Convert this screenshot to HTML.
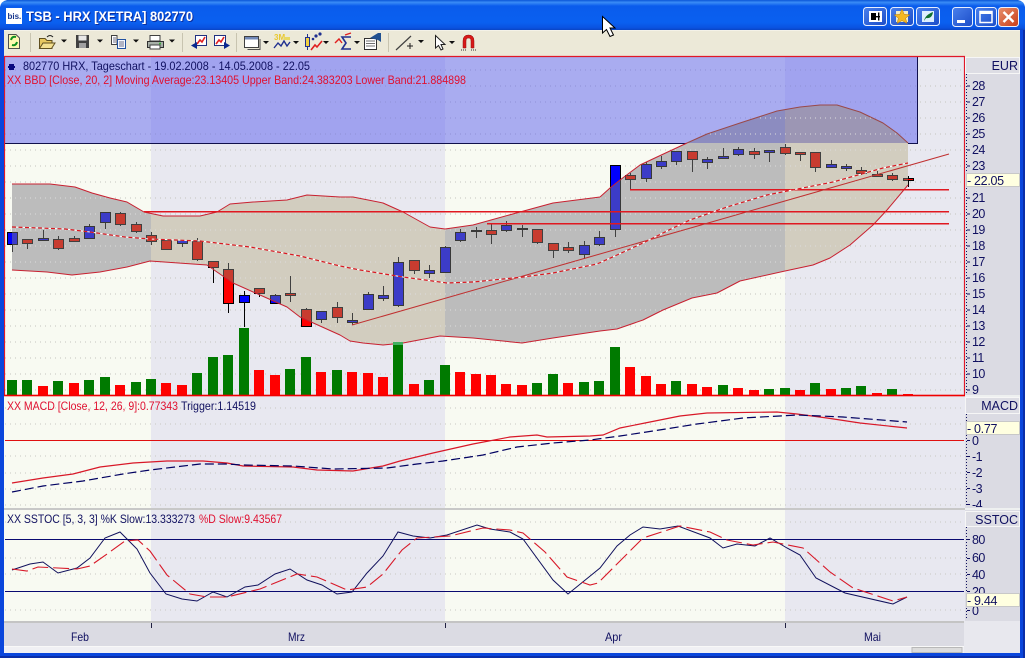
<!DOCTYPE html>
<html><head><meta charset="utf-8"><title>TSB - HRX [XETRA] 802770</title>
<style>
html,body{margin:0;padding:0;background:#fff;width:1025px;height:658px;overflow:hidden}
svg{display:block;font-family:"Liberation Sans",sans-serif}
</style></head><body>
<svg width="1025" height="658" viewBox="0 0 1025 658" xmlns="http://www.w3.org/2000/svg">
<defs>
<linearGradient id="tb" x1="0" y1="0" x2="0" y2="1">
<stop offset="0" stop-color="#0A56D8"/><stop offset=".08" stop-color="#3A8CF6"/><stop offset=".2" stop-color="#0A5CEC"/><stop offset=".75" stop-color="#0A60F0"/><stop offset=".93" stop-color="#0A52E0"/><stop offset="1" stop-color="#0A44C4"/>
</linearGradient>
<linearGradient id="bb" x1="0" y1="0" x2="1" y2="1"><stop offset="0" stop-color="#4A80EC"/><stop offset="1" stop-color="#1A4CC8"/></linearGradient>
<linearGradient id="rb" x1="0" y1="0" x2="1" y2="1"><stop offset="0" stop-color="#E8906C"/><stop offset="1" stop-color="#C83C18"/></linearGradient>
<path id="band" d="M12 184L50 184L75 187L92 193L110 198L127 202L144 212L163 216L200 216L217 212L230 204L253 202L287 200L307 195L340 197L353 197L383 203L403 212L430 227L445 229L473 225L520 212L553 203L600 197L610 188L620 180L640 165L657 157L672 150L687 143L707 134L740 123L777 111L800 107L820 105L837 105L860 112L883 123L897 133L908 143L908 185L887 210L873 225L850 245L830 258L813 265L785 271L740 281L717 293L692 298L663 310L643 320L617 329L600 331L573 335L553 338L522 343L473 338L440 336L403 343L383 345L363 343L350 341L340 335L300 317L287 307L233 283L217 272L207 265L150 261L127 267L100 272L72 275L47 272L12 270Z"/>
<clipPath id="cBand"><use href="#band"/></clipPath>
<clipPath id="cA"><rect x="5" y="143" width="146" height="260"/><rect x="445" y="143" width="340" height="260"/></clipPath>
<clipPath id="cB"><rect x="151" y="143" width="294" height="260"/><rect x="785" y="143" width="180" height="260"/></clipPath>
<clipPath id="cC"><rect x="445" y="57" width="340" height="86"/></clipPath>
<clipPath id="cD"><rect x="785" y="57" width="132" height="86"/></clipPath>
<clipPath id="cAx1"><rect x="965" y="74" width="55" height="321"/></clipPath>
<clipPath id="cAx2"><rect x="965" y="414" width="55" height="93"/></clipPath>
<clipPath id="cAx3"><rect x="965" y="527" width="55" height="93"/></clipPath>
<path id="wk" d="M12.5 244V252M27.5 243V249M43.5 230V241M58.5 236V250M74.5 236V242M89.5 224V239M105.5 222V229M120.5 212V226M136.5 222V233M151.5 232V245M182.5 243V247M197.5 238V261M213.5 267V283M228.5 263V313M244.5 291V327M259.5 293V297M275.5 294V304M290.5 276V302M306.5 308V327M321.5 319V323M337.5 302V323M352.5 313V325M368.5 292V310M383.5 286V301M398.5 257V307M414.5 270V274M429.5 265V278M445.5 246V273M460.5 229V242M476.5 227V238M491.5 223V244M506.5 221V232M522.5 225V237M537.5 242V244M553.5 250V258M568.5 242V253M584.5 241V259M599.5 231V246M615.5 229V237M630.5 173V189M646.5 162V182M661.5 156V169M676.5 161V165M692.5 159V172M707.5 157V169M723.5 148V158M738.5 147V156M754.5 148V159M769.5 152V162M785.5 144V155M800.5 154V161M815.5 167V172M831.5 160V168M846.5 164V171M861.5 167V175M877.5 171V177M892.5 173V181M908.5 176V187"/>
<path id="bl" d="M7.5 232.5h10v12h-10zM38.5 238.5h10v2h-10zM84.5 226.5h10v12h-10zM100.5 212.5h10v10h-10zM177.5 240.5h10v3h-10zM239.5 295.5h10v7h-10zM270.5 295.5h10v8h-10zM316.5 311.5h10v8h-10zM347.5 320.5h10v2h-10zM363.5 294.5h10v15h-10zM378.5 295.5h10v3h-10zM393.5 262.5h10v43h-10zM424.5 270.5h10v3h-10zM440.5 247.5h10v25h-10zM455.5 232.5h10v8h-10zM471.5 230.5h10v1h-10zM501.5 225.5h10v5h-10zM517.5 228.5h10v1h-10zM579.5 245.5h10v9h-10zM594.5 237.5h10v7h-10zM610.5 165.5h10v64h-10zM641.5 164.5h10v14h-10zM656.5 161.5h10v5h-10zM671.5 151.5h10v10h-10zM702.5 159.5h10v3h-10zM718.5 156.5h10v2h-10zM733.5 149.5h10v5h-10zM764.5 150.5h10v2h-10zM826.5 164.5h10v3h-10zM841.5 166.5h10v2h-10z"/>
<path id="rd" d="M22.5 239.5h10v4h-10zM53.5 239.5h10v9h-10zM69.5 238.5h10v3h-10zM115.5 213.5h10v11h-10zM131.5 224.5h10v7h-10zM146.5 235.5h10v6h-10zM161.5 240.5h10v9h-10zM192.5 241.5h10v18h-10zM208.5 261.5h10v6h-10zM223.5 269.5h10v34h-10zM254.5 288.5h10v5h-10zM285.5 293.5h10v2h-10zM301.5 309.5h10v17h-10zM332.5 307.5h10v10h-10zM409.5 260.5h10v10h-10zM486.5 230.5h10v4h-10zM532.5 229.5h10v13h-10zM548.5 243.5h10v7h-10zM563.5 247.5h10v3h-10zM625.5 175.5h10v4h-10zM687.5 151.5h10v8h-10zM749.5 151.5h10v3h-10zM780.5 147.5h10v6h-10zM795.5 152.5h10v2h-10zM810.5 152.5h10v15h-10zM856.5 170.5h10v3h-10zM872.5 174.5h10v2h-10zM887.5 175.5h10v4h-10zM903.5 178.5h10v2h-10z"/>
<path id="grid" d="M5 70H964M5 86H964M5 102H964M5 118H964M5 134H964M5 150H964M5 166H964M5 182H964M5 198H964M5 214H964M5 230H964M5 246H964M5 262H964M5 278H964M5 294H964M5 310H964M5 326H964M5 342H964M5 358H964M5 374H964M5 390H964"/>
<path id="ma" d="M12 227L40 228L65 229L90 232L125 237L150 239L200 241L250 247L300 256L340 266L360 270L403 277L447 283L473 282L523 277L553 273L597 264L617 255L643 243L673 228L690 220L727 207L767 195L833 182L883 168L908 163"/>
</defs>

<!-- window frame -->
<rect width="1025" height="658" fill="#0A46DC"/>
<path d="M0 30V7Q0 0 8 0H1017Q1025 0 1025 7V30Z" fill="url(#tb)"/>
<path d="M0 0H7Q1 1 0 7ZM1025 0H1018Q1024 1 1025 7Z" fill="#fff"/>
<rect x="1023" y="30" width="2" height="628" fill="#0A2EA8"/>
<rect x="0" y="656" width="1025" height="2" fill="#0A2EA8"/>

<!-- title -->
<rect x="6" y="8" width="16" height="16" fill="#fff"/>
<text x="7.5" y="19" font-size="8" font-weight="bold" fill="#14348C">bis.</text>
<text x="27" y="22" font-size="13.5" font-weight="bold" fill="#0A2EA0" textLength="167" lengthAdjust="spacingAndGlyphs">TSB - HRX [XETRA] 802770</text>
<text x="26" y="21" font-size="13.5" font-weight="bold" fill="#fff" textLength="167" lengthAdjust="spacingAndGlyphs">TSB - HRX [XETRA] 802770</text>

<!-- title buttons -->
<g stroke="#E8F0FF" stroke-width="1">
<rect x="863.5" y="7.5" width="23" height="18" rx="3" fill="url(#bb)"/>
<rect x="890.5" y="7.5" width="23" height="18" rx="3" fill="url(#bb)"/>
<rect x="916.5" y="7.5" width="23" height="18" rx="3" fill="url(#bb)"/>
<rect x="952.5" y="7.5" width="20" height="19" rx="3" fill="url(#bb)"/>
<rect x="975.5" y="7.5" width="21" height="19" rx="3" fill="url(#bb)"/>
<rect x="998.5" y="7.5" width="20" height="19" rx="3" fill="url(#rb)"/>
</g>
<rect x="869" y="11" width="13" height="11" fill="#fff"/>
<rect x="871" y="13" width="5" height="7" fill="#000"/><rect x="871" y="16" width="9" height="1.4" fill="#000"/><rect x="878" y="12.5" width="1.4" height="8" fill="#000"/>
<rect x="896" y="11" width="12" height="11" fill="#F0ECC8"/>
<path d="M902 9L904.2 14.3L910 14.8L905.6 18.2L907 23.5L902 20.6L897 23.5L898.4 18.2L894 14.8L899.8 14.3Z" fill="#F4B820" stroke="#B07818" stroke-width=".5"/>
<rect x="922" y="11" width="12" height="11" fill="#DCEEFF"/>
<path d="M924 21Q925 15 933 12Q932 19 926 18Z" fill="#107030"/>
<rect x="957" y="20" width="8" height="3" fill="#fff"/>
<path d="M980 11.5H992V22.5H980Z" fill="none" stroke="#fff" stroke-width="1.5"/><rect x="980" y="11" width="12" height="3" fill="#fff"/>
<path d="M1003.5 12L1013.5 22M1013.5 12L1003.5 22" stroke="#fff" stroke-width="2.4"/>

<!-- toolbar -->
<rect x="4" y="30" width="1016" height="26" fill="#ECE9D8"/>
<rect x="4" y="30" width="1016" height="1" fill="#F4F2E8"/>
<g stroke="#C8C4B0"><path d="M30.5 33V52M182.5 33V52M236.5 33V52M388.5 33V52"/></g>
<!-- refresh -->
<path d="M8.5 34.5H16L19.5 38V48.5H8.5Z" fill="#FFF8B0" stroke="#505050"/>
<path d="M11 40Q12 36 16 37M17 42Q16 46 12 45" stroke="#109020" stroke-width="2" fill="none"/>
<!-- folder -->
<path d="M39.5 38.5H45L47 40.5H52V48.5H39.5Z" fill="#E8C860" stroke="#605020"/>
<path d="M39.5 48.5L43 43H55L51.5 48.5Z" fill="#F4E090" stroke="#605020"/>
<path d="M47 37Q50 34 53 37" stroke="#202020" fill="none"/>
<!-- save -->
<rect x="76" y="35" width="13" height="13" fill="#404040"/><rect x="78.5" y="35.5" width="8" height="5" fill="#E8E8E8"/><rect x="79" y="43" width="7" height="5" fill="#A0A0A0"/>
<!-- copy -->
<path d="M111.5 35.5H117V44.5H111.5Z" fill="#fff" stroke="#404040"/><path d="M117.5 39.5H125.5V48.5H117.5Z" fill="#F4F8FF" stroke="#2050A0"/>
<path d="M113 38H116M113 40H116M113 42H116M119 42H124M119 44H124M119 46H124" stroke="#404060" stroke-width=".8"/>
<!-- print -->
<path d="M150 35.5H160V41H150Z" fill="#fff" stroke="#404040"/><path d="M147.5 41.5H163.5V47.5H147.5Z" fill="#A8B0A8" stroke="#303030"/><path d="M150 45H160V49H150Z" fill="#fff" stroke="#404040"/><circle cx="160" cy="43.5" r="1" fill="#30B030"/>
<!-- chart back/fwd -->
<rect x="195.5" y="35.5" width="11" height="10" fill="#fff" stroke="#203080"/><path d="M197 44L200 40L202 42L205 37" stroke="#E02020" stroke-width="1.6" fill="none"/><path d="M197 42V49L191 45.5Z" fill="#0A2890"/>
<rect x="214.5" y="35.5" width="11" height="10" fill="#fff" stroke="#203080"/><path d="M216 44L219 40L221 42L224 37" stroke="#E02020" stroke-width="1.6" fill="none"/><path d="M224 42V49L230 45.5Z" fill="#0A2890"/>
<!-- window icon -->
<rect x="244.5" y="36.5" width="14" height="11" fill="#fff" stroke="#404040"/><rect x="245" y="37" width="13" height="2.5" fill="#7088B8"/><path d="M247.5 49.5H260V39" fill="none" stroke="#505050"/>
<!-- 3M -->
<text x="274" y="40" font-size="8" font-weight="bold" fill="#E8C830">3M</text>
<path d="M274 48L278 43L281 46L284 41L287 46L290 42" stroke="#203090" stroke-width="1.4" fill="none"/><path d="M284 37h6v3h-6z" fill="#E8D860"/>
<!-- candles icon -->
<path d="M307.5 34V50" stroke="#203090"/><rect x="305.5" y="37.5" width="4" height="9" fill="#F0D040" stroke="#203090"/>
<path d="M311 50L315 45L317 47L322 41" stroke="#E02020" stroke-width="1.6" fill="none"/><circle cx="316" cy="36" r="1.6" fill="#203090"/><circle cx="320" cy="34" r="1.6" fill="#203090"/><circle cx="313" cy="39" r="1.3" fill="#203090"/>
<!-- sigma -->
<path d="M335 43L339 39L342 43" stroke="#E02020" stroke-width="1.4" fill="none"/><path d="M351 37H342L346 43L342 49H351" stroke="#203090" stroke-width="1.6" fill="none"/><path d="M345 35L351 33" stroke="#E02020" stroke-width="1.4"/>
<!-- doc icon -->
<rect x="364.5" y="38.5" width="12" height="11" fill="#fff" stroke="#303030"/><path d="M366 41H375M366 43.5H375M366 46H375" stroke="#707070"/><path d="M370 38L378 33H381V42L378 40Z" fill="#205090"/>
<!-- line tool -->
<path d="M396 50L411 36" stroke="#404040" stroke-width="1.2"/><path d="M407 46H413M410 43V49" stroke="#202020"/>
<!-- cursor tool -->
<path d="M435.5 35.5V48L438.5 45.5L441 50L443 49L441 44.5H445Z" fill="#fff" stroke="#202020"/>
<!-- magnet -->
<path d="M463 48V41Q463 35 468.5 35Q474 35 474 41V48H471V41Q471 38 468.5 38Q466 38 466 41V48Z" fill="#D81818" stroke="#901010" stroke-width=".5"/><path d="M461 50h5M471 50h5" stroke="#303030" stroke-dasharray="1 1"/>
<!-- dropdown arrows -->
<path d="M61 39.5h6l-3 3zM97 39.5h6l-3 3zM133 39.5h6l-3 3zM169 39.5h6l-3 3zM263 41h6l-3 3zM293 41h6l-3 3zM323 41h6l-3 3zM354 41h6l-3 3zM418 40h6l-3 3zM449 41h6l-3 3z" fill="#101010"/>

<!-- pane backgrounds -->
<rect x="4" y="56" width="961" height="566" fill="#F8FAF2"/>
<rect x="151" y="57" width="294" height="565" fill="#E8E8F0"/>
<rect x="785" y="57" width="180" height="565" fill="#E8E8F0"/>
<!-- grid main -->
<use href="#grid" fill="none" stroke="#C4C4BE" stroke-dasharray="1 4"/>
<!-- blue box -->
<rect x="5" y="57" width="912" height="86" fill="#5A5EEE" fill-opacity=".5"/>
<path d="M4 143.5H917.5V57" fill="none" stroke="#10104C"/>
<!-- band fill -->
<g clip-path="url(#cA)"><use href="#band" fill="#BCBCBC"/></g>
<g clip-path="url(#cB)"><use href="#band" fill="#D2CDBF"/></g>
<g clip-path="url(#cC)"><use href="#band" fill="#8C8CC0"/></g>
<g clip-path="url(#cD)"><use href="#band" fill="#9C96B4"/></g>
<g clip-path="url(#cBand)"><use href="#grid" fill="none" stroke="#DCDCDC" stroke-dasharray="1 4"/></g>

<!-- candles outside band (pure colours) -->
<use href="#wk" stroke="#000" fill="none"/>
<use href="#bl" fill="#0000FF" stroke="#000"/>
<use href="#rd" fill="#FF0000" stroke="#000"/>
<!-- candles inside band -->
<g clip-path="url(#cBand)">
<use href="#wk" stroke="#404040" fill="none"/>
<use href="#bl" fill="#3C3CC8" stroke="#383838"/>
<use href="#rd" fill="#C83C30" stroke="#404040"/>
</g>

<!-- band outline (open, no vertical end caps) and lines -->
<g fill="none" stroke-width="1" stroke-linejoin="round">
<path stroke="#C82030" d="M12 184L50 184L75 187L92 193L110 198L127 202L144 212L163 216L200 216L217 212L230 204L253 202L287 200L307 195L340 197L353 197L383 203L403 212L430 227L445 229L473 225L520 212L553 203L600 197L610 188L620 180L640 165L657 157L672 150L687 143"/>
<path stroke="#9A4848" d="M687 143L707 134L740 123L777 111L800 107L820 105L837 105L860 112L883 123L897 133L908 143"/>
<path stroke="#C82030" d="M908 185L887 210L873 225L850 245L830 258L813 265L785 271L740 281L717 293L692 298L663 310L643 320L617 329L600 331L573 335L553 338L522 343L473 338L440 336L403 343L383 345L363 343L350 341L340 335L300 317L287 307L233 283L217 272L207 265L150 261L127 267L100 272L72 275L47 272L12 270"/>
</g>
<rect x="144" y="211" width="805" height="1.5" fill="#E01820"/>
<rect x="487" y="223" width="462" height="1.5" fill="#E01820"/>
<rect x="630" y="189" width="319" height="1.5" fill="#E01820"/>
<path d="M352 325L949 154" stroke="#C03030" stroke-width="1" fill="none"/>
<use href="#ma" fill="none" stroke="#fff" stroke-width="1.1"/>
<use href="#ma" fill="none" stroke="#D81820" stroke-width="1.2" stroke-dasharray="4 2.5"/>

<!-- volume -->
<path fill="#007A00" d="M7 380h10v15h-10zM22 380h10v15h-10zM53 381h10v14h-10zM84 380h10v15h-10zM100 377h10v18h-10zM131 382h10v13h-10zM146 379h10v16h-10zM192 373h10v22h-10zM208 357h10v38h-10zM223 355h10v40h-10zM239 328h10v67h-10zM285 369h10v26h-10zM301 357h10v38h-10zM332 370h10v25h-10zM393 342h10v53h-10zM424 380h10v15h-10zM440 365h10v30h-10zM532 383h10v12h-10zM548 374h10v21h-10zM579 382h10v13h-10zM594 381h10v14h-10zM610 347h10v48h-10zM671 381h10v14h-10zM718 385h10v10h-10zM764 389h10v6h-10zM780 388h10v7h-10zM810 383h10v12h-10zM841 388h10v7h-10zM856 386h10v9h-10zM887 389h10v6h-10z"/>
<path fill="#FF0000" d="M38 386h10v9h-10zM69 383h10v12h-10zM115 385h10v10h-10zM161 383h10v12h-10zM177 385h10v10h-10zM254 370h10v25h-10zM270 375h10v20h-10zM316 372h10v23h-10zM347 372h10v23h-10zM363 373h10v22h-10zM378 377h10v18h-10zM409 384h10v11h-10zM455 372h10v23h-10zM471 374h10v21h-10zM486 375h10v20h-10zM501 384h10v11h-10zM517 385h10v10h-10zM563 383h10v12h-10zM625 367h10v28h-10zM641 376h10v19h-10zM656 384h10v11h-10zM687 384h10v11h-10zM702 387h10v8h-10zM733 388h10v7h-10zM749 390h10v5h-10zM795 390h10v5h-10zM826 389h10v6h-10zM872 393h10v2h-10zM903 394h10v1h-10z"/>
<rect x="393" y="342" width="10" height="3" fill="#40B060"/>

<!-- main pane border -->
<path d="M4.5 395.5V56.5H964.5V395.5Z" fill="none" stroke="#E01828" stroke-width="1.2"/>
<path d="M4 395.5H965" stroke="#F00000" stroke-width="1.6"/>

<!-- legend main -->
<path d="M9 64h5v2h1v2h-1v2h-5v-2h-1v-2h1z" fill="#0A0A80"/>
<text x="23" y="70" font-size="12" fill="#101060" textLength="287" lengthAdjust="spacingAndGlyphs">802770  HRX, Tageschart - 19.02.2008 - 14.05.2008 - 22.05</text>
<text x="7" y="84" font-size="12" fill="#E01030" textLength="459" lengthAdjust="spacingAndGlyphs">XX BBD [Close, 20, 2] Moving Average:23.13405 Upper Band:24.383203 Lower Band:21.884898</text>

<!-- MACD pane -->
<path d="M5 408H964M5 424H964M5 456H964M5 473H964M5 489H964M5 505H964" stroke="#C8C8C2" stroke-dasharray="1 4" fill="none"/>
<rect x="5" y="440" width="959" height="1" fill="#E01010"/>
<path d="M12 483L43 478L73 474L100 467L133 463L167 461L203 461L227 463L243 466L293 467L317 470L353 471L383 466L400 461L433 453L473 444L510 437L537 435L547 437L590 436L603 435L620 428L650 422L680 416L707 413L777 412L797 414L827 418L860 423L907 428" fill="none" stroke="#D81828" stroke-width="1.2"/>
<path d="M12 492L43 486L83 481L123 474L150 470L200 464L227 464L243 465L293 466L333 469L387 468L417 464L443 461L483 455L517 447L553 443L590 440L620 436L653 431L697 424L743 418L797 415L843 417L907 422" fill="none" stroke="#000060" stroke-width="1.2" stroke-dasharray="9 4"/>
<text x="7" y="410" font-size="12" fill="#E01030" textLength="171" lengthAdjust="spacingAndGlyphs">XX MACD [Close, 12, 26, 9]:0.77343</text>
<text x="181" y="410" font-size="12" fill="#101060" textLength="75" lengthAdjust="spacingAndGlyphs">Trigger:1.14519</text>

<!-- SSTOC pane -->
<rect x="4" y="508" width="961" height="2" fill="#C8C8C8"/>
<path d="M5 522H964M5 558H964M5 574H964M5 610H964" stroke="#C8C8C2" stroke-dasharray="1 4" fill="none"/>
<rect x="5" y="539" width="959" height="1" fill="#0A0A70"/>
<rect x="5" y="591" width="959" height="1" fill="#0A0A70"/>
<path d="M12 570L30 564L43 562L58 573L77 568L90 558L105 538L120 532L137 549L150 573L166 594L182 599L197 601L213 592L227 597L245 587L258 585L275 574L290 569L307 580L322 585L337 594L352 592L367 573L383 556L398 532L413 536L430 538L447 535L477 525L490 529L510 532L523 539L553 580L568 594L600 568L617 546L630 535L643 527L660 529L678 526L710 538L723 548L737 544L755 546L770 538L787 548L800 555L816 578L845 593L893 604L907 597" fill="none" stroke="#10105C" stroke-width="1"/>
<path d="M12 569L27 571L38 567L58 568L77 569L90 566L107 554L125 541L138 540L150 551L167 575L190 594L207 597L227 597L260 589L297 574L317 577L347 590L367 587L383 574L402 550L417 538L450 536L483 528L510 530L523 533L545 552L567 577L590 585L598 583L623 558L643 538L680 526L710 532L727 540L753 545L773 542L803 548L830 572L853 588L893 601L907 597" fill="none" stroke="#D81828" stroke-width="1.1" stroke-dasharray="16 5"/>
<text x="7" y="523" font-size="12" fill="#101060" textLength="188" lengthAdjust="spacingAndGlyphs">XX SSTOC [5, 3, 3] %K Slow:13.333273</text>
<text x="199" y="523" font-size="12" fill="#E01030" textLength="83" lengthAdjust="spacingAndGlyphs">%D Slow:9.43567</text>

<!-- date axis -->
<rect x="4" y="621" width="961" height="2" fill="#C4C4C4"/>
<rect x="4" y="623" width="961" height="24" fill="#DBDBE3"/>
<path d="M151.5 623V628M445.5 623V628M785.5 623V628" stroke="#202040"/>
<g font-size="12" fill="#101060">
<text x="71" y="641" textLength="18" lengthAdjust="spacingAndGlyphs">Feb</text>
<text x="288" y="641" textLength="17" lengthAdjust="spacingAndGlyphs">Mrz</text>
<text x="605" y="641" textLength="17" lengthAdjust="spacingAndGlyphs">Apr</text>
<text x="864" y="641" textLength="17" lengthAdjust="spacingAndGlyphs">Mai</text>
</g>
<!-- scrollbar -->
<rect x="4" y="647" width="960" height="6" fill="#F0F0F4"/>
<rect x="912" y="647.5" width="50" height="5" fill="#DCDCDC" stroke="#B8B8B8"/>
<rect x="4" y="646" width="961" height="1" fill="#F8F8F8"/>

<!-- right axis column -->
<rect x="965" y="56" width="55" height="597" fill="#DBDBE3"/>
<rect x="965" y="508" width="55" height="2" fill="#EEF0F0"/>
<rect x="964" y="621" width="56" height="32" fill="#E8E8EE"/>
<rect x="965" y="56" width="55" height="1" fill="#ECE9D8"/>
<rect x="1020" y="30" width="3" height="628" fill="#0A46DC"/>
<rect x="0" y="653" width="1023" height="3" fill="#0A46DC"/>
<rect x="0" y="30" width="4" height="626" fill="#0A46DC"/>
<!-- header boxes -->
<g fill="#DDDDE4" stroke="#F6F6F6">
<rect x="965.5" y="57.5" width="54" height="16"/>
<rect x="965.5" y="397.5" width="54" height="16"/>
<rect x="965.5" y="511.5" width="54" height="15"/>
</g>
<path d="M965 396H1020" stroke="#EEF0F0" stroke-width="2"/>
<g font-size="12.5" fill="#101060" text-anchor="end">
<text x="1018" y="70">EUR</text>
<text x="1018" y="410">MACD</text>
<text x="1018" y="524">SSTOC</text>
</g>
<!-- axis 1 -->
<path d="M966.5 74V395M966.5 414V507M966.5 527V620" stroke="#101060" stroke-dasharray="1 2"/>
<g clip-path="url(#cAx1)">
<path d="M967 86H970M967 102H970M967 118H970M967 134H970M967 150H970M967 166H970M967 198H970M967 214H970M967 230H970M967 246H970M967 262H970M967 278H970M967 294H970M967 310H970M967 326H970M967 342H970M967 358H970M967 374H970M967 390H970" stroke="#101060"/>
<g font-size="12.5" fill="#101060" letter-spacing="-.6">
<text x="972" y="90">28</text><text x="972" y="106">27</text><text x="972" y="122">26</text><text x="972" y="138">25</text><text x="972" y="154">24</text><text x="972" y="170">23</text><text x="972" y="202">21</text><text x="972" y="218">20</text><text x="972" y="234">19</text><text x="972" y="250">18</text><text x="972" y="266">17</text><text x="972" y="282">16</text><text x="972" y="298">15</text><text x="972" y="314">14</text><text x="972" y="330">13</text><text x="972" y="346">12</text><text x="972" y="362">11</text><text x="972" y="378">10</text><text x="972" y="394">9</text>
</g></g>
<rect x="966.5" y="173.5" width="53" height="13" fill="#FFFFE0" stroke="#C8C8C8"/>
<text x="967" y="185" font-size="12.5" fill="#101060" letter-spacing="-.3">- 22.05</text>
<!-- axis 2 -->
<g clip-path="url(#cAx2)">
<path d="M967 440.5H970M967 456.5H970M967 472.5H970M967 488.5H970M967 504.5H970" stroke="#101060"/>
<g font-size="12.5" fill="#101060" letter-spacing="-.6">
<text x="972" y="445">0</text><text x="972" y="461">-1</text><text x="972" y="477">-2</text><text x="972" y="493">-3</text><text x="972" y="509">-4</text>
</g></g>
<rect x="966.5" y="421.5" width="53" height="13" fill="#FFFFE0" stroke="#C8C8C8"/>
<text x="967" y="433" font-size="12.5" fill="#101060" letter-spacing="-.3">- 0.77</text>
<!-- axis 3 -->
<g clip-path="url(#cAx3)">
<path d="M967 539.5H970M967 558.5H970M967 574.5H970M967 591.5H970M967 610.5H970" stroke="#101060"/>
<g font-size="12.5" fill="#101060" letter-spacing="-.6">
<text x="972" y="544">80</text><text x="972" y="562">60</text><text x="972" y="579">40</text><text x="972" y="596">20</text><text x="972" y="615">0</text>
</g></g>
<rect x="966.5" y="593.5" width="53" height="13" fill="#FFFFE0" stroke="#C8C8C8"/>
<text x="967" y="605" font-size="12.5" fill="#101060" letter-spacing="-.3">- 9.44</text>

<!-- mouse cursor -->
<path d="M602.5 16.5V33L606.5 29.5L610 36.5L613.5 35L610 28H615Z" fill="#fff" stroke="#000" stroke-width="1"/>
</svg>
</body></html>
